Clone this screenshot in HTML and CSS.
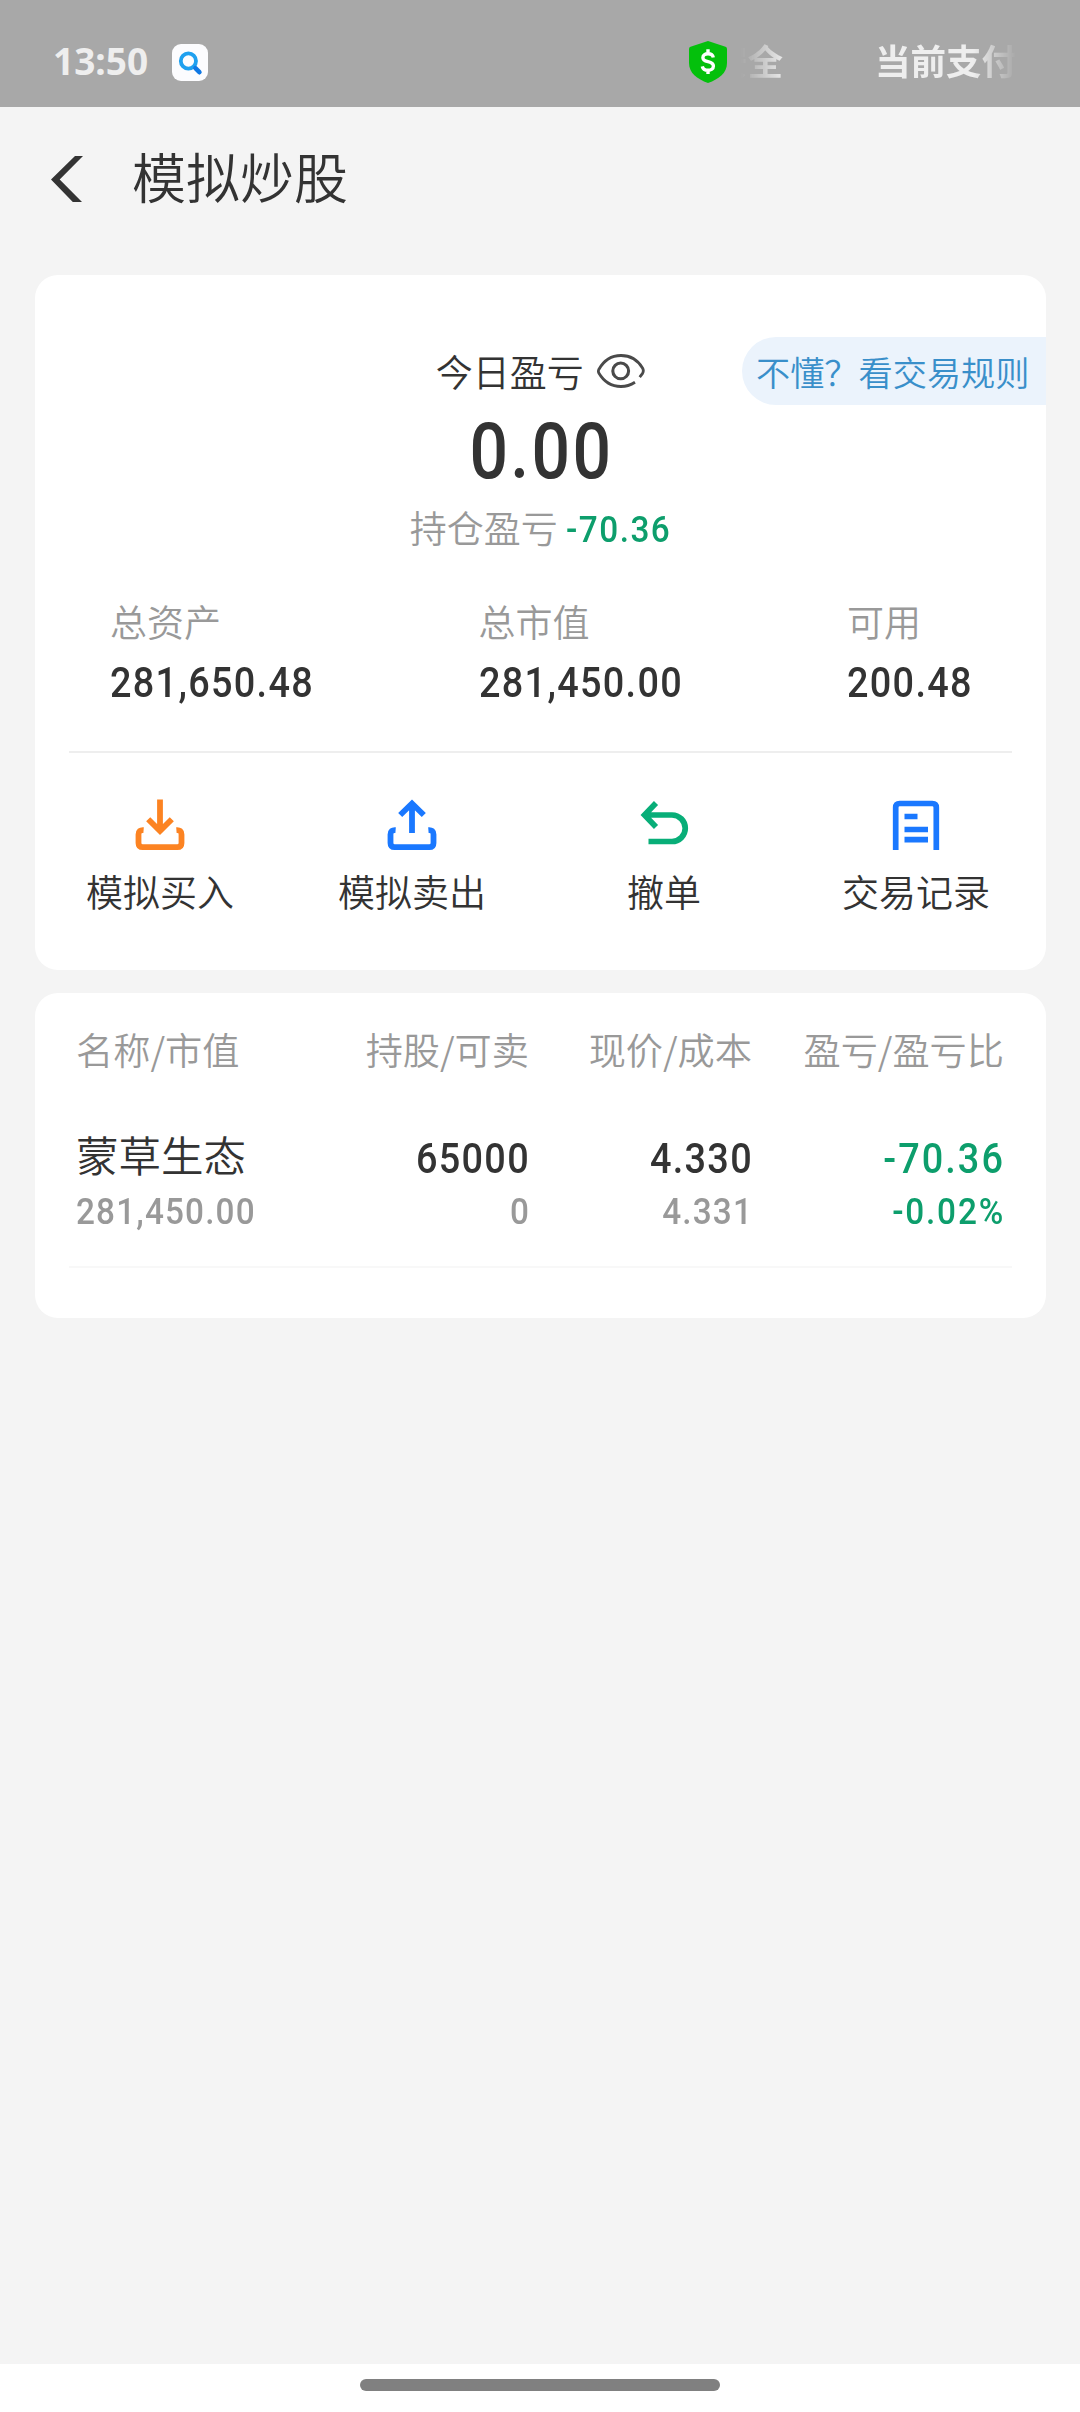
FILE: index.html
```html
<!DOCTYPE html>
<html lang="zh-CN">
<head>
<meta charset="utf-8">
<title>模拟炒股</title>
<link rel="stylesheet" href="styles.css">
</head>
<body>
<div class="app">
  <header class="status">
    <span class="clock">13:50</span>
    <svg class="search-app" viewBox="0 0 36 37"><rect width="36" height="37" rx="9" fill="#fcfcfe"/><circle cx="16.4" cy="17" r="7.6" fill="none" stroke="#1fa0ef" stroke-width="3.8"/><path d="M23.4 24.2l4 4" stroke="#0f78e4" stroke-width="4.6" stroke-linecap="round"/></svg>
    <svg class="shield" viewBox="0 0 38 42"><path d="M19 0L36.500 5.800Q38 6.300 38 8V22C38 32 30 38 19 42C8 38 0 32 0 22V8Q0 6.300 1.500 5.800Z" fill="#04c00c"/><path d="M24.300 16.500C23.800 13.800 21.700 12.700 19 12.700C16 12.700 13.900 14.300 13.900 16.700C13.900 22.100 24.400 19.200 24.400 25C24.400 27.700 22.100 29.300 19 29.300C16 29.300 13.900 28 13.300 25.300M19 8.300V12.700M19 29.300V33" fill="none" stroke="#fff" stroke-width="3.400"/></svg>
    <div class="marquee"><span class="notice">安全</span><span class="notice">当前支付</span></div>
  </header>
  <nav class="titlebar">
    <svg class="back" viewBox="0 0 32 46"><path d="M24 0H32L8.700 23.400L31 46H21.800L0 23.400Z" fill="#333"/></svg>
    <h1 class="title">模拟炒股</h1>
  </nav>
  <main class="content">
    <section class="card summary">
      <div class="today">
        <div class="today-label"><span>今日盈亏</span>
          <svg class="eye" viewBox="0 0 48 34"><path d="M38 28.200C33.500 31.100 28.900 32.500 24 32.500C14 32.500 6.500 27 1.800 19Q1 17.200 1.800 15.500C6.500 7 14 1.500 24 1.500C33.500 1.500 41 6.500 45.500 14Q47.200 17 45.400 19.600L42.700 23.200" fill="none" stroke="#4a4a4a" stroke-width="2.800"/><circle cx="23.700" cy="16.900" r="7.900" fill="none" stroke="#4a4a4a" stroke-width="3.100"/></svg>
        </div>
        <a class="rules">不懂？看交易规则</a>
      </div>
      <div class="profit num">0.00</div>
      <div class="holding"><span>持仓盈亏</span><span class="num down">-70.36</span></div>
      <div class="assets">
        <div class="asset"><span class="label">总资产</span><span class="num value">281,650.48</span></div>
        <div class="asset"><span class="label">总市值</span><span class="num value">281,450.00</span></div>
        <div class="asset"><span class="label">可用</span><span class="num value">200.48</span></div>
      </div>
      <div class="actions">
        <a class="action"><svg class="icon" viewBox="0 0 50 52"><path d="M8.600 31.200Q3.500 30.800 3.500 35.500V44Q3.500 48.200 7.700 48.200H42.300Q46.500 48.200 46.500 44V35.500Q46.500 30.800 41.400 31.200M25 .5V32M13.200 20.200L25 32L36.800 20.200" fill="none" stroke="#fc8322" stroke-width="5.800"/></svg><span>模拟买入</span></a>
        <a class="action"><svg class="icon" viewBox="0 0 50 52"><path d="M8.600 31.200Q3.500 30.800 3.500 35.500V44Q3.500 48.200 7.700 48.200H42.300Q46.500 48.200 46.500 44V35.500Q46.500 30.800 41.400 31.200M25 34V4.500M13.200 16L25 4.500L36.800 16" fill="none" stroke="#1a78ff" stroke-width="5.800"/></svg><span>模拟卖出</span></a>
        <a class="action"><svg class="icon" viewBox="0 0 50 52"><path d="M17 4L5.500 16L17 28M6 16H33A13 13 0 0 1 33 42.500H9.500" fill="none" stroke="#08ae78" stroke-width="5.700"/></svg><span>撤单</span></a>
        <a class="action"><svg class="icon" viewBox="0 0 50 52"><path d="M4.700 51V8.500Q4.700 4.500 8.700 4.500H41.300Q45.300 4.500 45.300 8.500V51M13.500 17.500H26.500M13.500 30.500H37M13.500 40.700H37" fill="none" stroke="#1a78ff" stroke-width="5.700"/></svg><span>交易记录</span></a>
      </div>
    </section>
    <section class="card positions">
      <div class="row head"><span>名称/市值</span><span>持股/可卖</span><span>现价/成本</span><span>盈亏/盈亏比</span></div>
      <div class="row main"><span class="name">蒙草生态</span><span class="num">65000</span><span class="num">4.330</span><span class="num down">-70.36</span></div>
      <div class="row sub"><span class="num">281,450.00</span><span class="num">0</span><span class="num">4.331</span><span class="num down">-0.02%</span></div>
    </section>
  </main>
  <footer class="gesture"><div class="handle"></div></footer>
</div>
</body>
</html>
```
FILE: styles.css
```css
* { box-sizing: border-box; }
body {
  margin: 0;
  background: #f4f4f4;
  color: #333;
  font: 350 37px/54px "Noto Sans CJK SC", sans-serif;
}
.app { width: 1080px; height: 2412px; display: flex; flex-direction: column; overflow: hidden; }
.status { height: 107px; background: #a8a8a8; display: flex; align-items: flex-start; padding-left: 53px; color: #eee; }
.clock { width: 119px; margin-top: 34px; font: 700 37px/54px "Noto Sans", sans-serif; white-space: nowrap; }
.search-app { width: 36px; height: 37px; margin-top: 44px; }
.shield { width: 38px; height: 42px; margin: 41px -15px 0 481px; }
.marquee {
  width: 320px;
  margin-top: 33px;
  display: flex;
  gap: 92px;
  white-space: nowrap;
  font-size: 35.5px;
  font-weight: 700;
  -webkit-mask-image: linear-gradient(to right, transparent 29px, #000 75px, #000 261px, transparent 304px);
  mask-image: linear-gradient(to right, transparent 29px, #000 75px, #000 261px, transparent 304px);
}
.titlebar { height: 168px; display: flex; align-items: flex-start; padding-left: 51px; }
.back { width: 32px; height: 46px; margin-top: 49px; }
.title { margin: 29px 0 0 49px; font-size: 54px; line-height: 80px; font-weight: 350; }
.content { flex: 1; padding: 0 34.500px 0 35px; }
.card { background: #fff; border-radius: 23px; }
/* condensed figures: narrower glyphs, slightly opened tracking */
.num { font-family: Roboto, sans-serif; font-weight: 500; letter-spacing: .035em; transform: scaleX(.9); transform-origin: left; }
.down { color: #0d9e6c; }
.summary { height: 695px; padding-top: 62px; overflow: hidden; }
.today { height: 68px; display: grid; grid-template-columns: 1fr auto 1fr; align-items: center; }
.today-label { grid-column: 2; display: flex; align-items: center; gap: 13px; line-height: 52px; }
.eye { width: 48px; height: 34px; }
.rules {
  justify-self: end;
  height: 68px;
  padding: 0 16px 0 14px;
  border-radius: 34px 0 0 34px;
  background: #ebf3fc;
  color: #398fca;
  font-size: 34.200px;
  line-height: 68px;
  white-space: nowrap;
}
.profit { height: 92px; font-size: 78px; line-height: 94px; text-align: center; text-indent: .035em; transform: scaleX(.87); transform-origin: center; }
.holding { height: 64px; padding-left: 12px; display: flex; justify-content: center; gap: 8px; color: #999; line-height: 60px; }
.holding .num { line-height: 65px; letter-spacing: .045em; }
.assets { height: 192px; margin: 0 34px; padding: 33px 41px 0; display: grid; grid-template-columns: 368.500px 368.500px auto; align-content: start; border-bottom: 2px solid #eee; }
.asset { display: flex; flex-direction: column; }
.label { color: #999; }
.value { margin-top: 2px; font-size: 42px; line-height: 66px; }
.actions { margin-left: -1px; display: grid; grid-template-columns: repeat(4, 252px); }
.action { display: flex; flex-direction: column; align-items: center; padding-top: 46px; }
.icon { width: 50px; height: 52px; }
.action span { margin-top: 13px; }
.positions { height: 325px; margin-top: 23px; padding: 0 34px; }
.row { display: grid; grid-template-columns: 201px 252px 223px 252px; padding-left: 7px; color: #999; white-space: nowrap; }
.row span:not(:first-child) { text-align: right; }
.row .num:not(:first-child) { transform-origin: right; margin-right: -1px; }
.head { padding-top: 29px; font-size: 37.200px; }
.main { color: #333; padding-top: 48px; font-size: 42px; line-height: 62px; }
.main .name { font-size: 42.500px; line-height: 59px; }
.main .num { line-height: 69px; }
.sub { height: 75px; line-height: 37px; border-bottom: 2px solid #f8f8f8; }
.row .down { color: #0d9e6c; letter-spacing: .055em; }
.gesture { height: 48px; background: #fff; padding-top: 15px; }
.handle { width: 360px; height: 12px; margin: 0 auto; border-radius: 6px; background: #808080; }
```
